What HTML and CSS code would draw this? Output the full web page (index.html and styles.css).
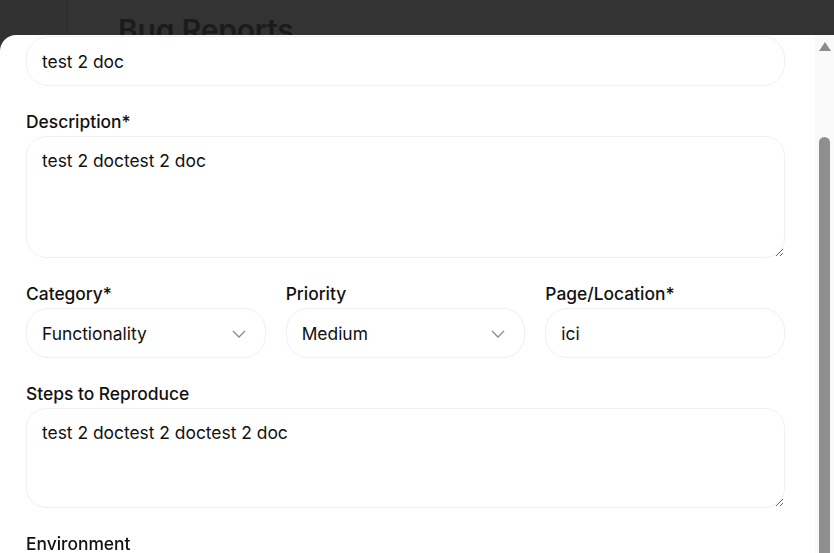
FILE: index.html
```html
<!DOCTYPE html>
<html lang="en">
<head>
<meta charset="utf-8">
<title>Bug Reports</title>
<link rel="stylesheet" href="styles.css">
</head>
<body>
<div class="app">
  <aside class="sidebar"></aside>
  <main class="page">
    <h1 class="page-title">Bug Reports</h1>
  </main>
</div>
<div class="overlay">
  <div class="modal">
    <div class="modal-body">
      <form class="form">
        <div class="field first">
          <input class="control input" type="text" value="test 2 doc">
        </div>
        <div class="field">
          <label class="label">Description*</label>
          <textarea class="control textarea desc">test 2 doctest 2 doc</textarea>
        </div>
        <div class="row">
          <div class="field">
            <label class="label">Category*</label>
            <div class="control select">
              <span>Functionality</span>
              <svg class="chev" width="14" height="8" viewBox="0 0 14 8"><path d="M1 1l6 6 6-6" fill="none" stroke="#8a8a8a" stroke-width="1.3"/></svg>
            </div>
          </div>
          <div class="field">
            <label class="label">Priority</label>
            <div class="control select">
              <span>Medium</span>
              <svg class="chev" width="14" height="8" viewBox="0 0 14 8"><path d="M1 1l6 6 6-6" fill="none" stroke="#8a8a8a" stroke-width="1.3"/></svg>
            </div>
          </div>
          <div class="field">
            <label class="label">Page/Location*</label>
            <input class="control input" type="text" value="ici">
          </div>
        </div>
        <div class="field">
          <label class="label">Steps to Reproduce</label>
          <textarea class="control textarea steps">test 2 doctest 2 doctest 2 doc</textarea>
        </div>
        <div class="field">
          <label class="label">Environment</label>
          <input class="control input" type="text" value="">
        </div>
      </form>
    </div>
    <div class="scrollbar">
      <div class="scroll-arrow"></div>
      <div class="scroll-thumb"></div>
    </div>
  </div>
</div>
</body>
</html>
```
FILE: styles.css
```css
* { box-sizing: border-box; }
html, body { margin: 0; padding: 0; height: 100%; overflow: hidden; }
body {
  background: #333333;
  font-family: Inter, "Noto Sans", sans-serif;
  color: #111;
}
.app { display: flex; height: 100%; }
.sidebar {
  width: 67px;
  flex: none;
  background: #323232;
  border-right: 1px solid #2b2b2b;
}
.page { flex: 1; padding: 12px 0 0 51px; }
.page-title {
  margin: 0;
  font-size: 30px;
  font-weight: 600;
  color: #1b1b1b;
  letter-spacing: -0.2px;
}
.overlay {
  position: fixed;
  top: 35px;
  left: 0;
  right: 0;
  bottom: 0;
}
.modal {
  height: 100%;
  background: #fff;
  border-radius: 16px 0 0 0;
  display: flex;
  overflow: hidden;
}
.modal-body {
  flex: 1;
  min-width: 0;
  padding: 1px 30px 0 26px;
}
.form { display: flex; flex-direction: column; gap: 24px; }
.field { display: flex; flex-direction: column; min-width: 0; }
.label {
  font-size: 17.4px;
  font-weight: 500;
  line-height: 24px;
  margin-bottom: 2px;
  color: #111;
}
.control {
  width: 100%;
  font-family: Inter, "Noto Sans", sans-serif;
  font-size: 17.4px;
  color: #111;
  background: #fff;
  border: 1px solid #f0f0f0;
  outline: none;
}
.input {
  height: 50px;
  border-radius: 22px;
  padding: 1px 15px 0;
}
.textarea {
  border-radius: 20px;
  padding: 12px 15px;
  line-height: 24px;
  resize: vertical;
}
.desc { height: 122px; }
.steps { height: 100px; }
.row {
  display: grid;
  grid-template-columns: repeat(3, minmax(0, 1fr));
  gap: 20px;
}
.select {
  height: 50px;
  border-radius: 22px;
  padding: 1px 19px 0 15px;
  display: flex;
  align-items: center;
  justify-content: space-between;
}
.chev { flex: none; }
.scrollbar {
  width: 19px;
  flex: none;
  background: #f9f9f9;
  display: flex;
  flex-direction: column;
  align-items: center;
}
.scroll-arrow {
  margin-top: 7px;
  width: 0;
  height: 0;
  border-left: 6px solid transparent;
  border-right: 6px solid transparent;
  border-bottom: 9px solid #8c8c8c;
}
.scroll-thumb {
  margin-top: 86px;
  width: 11px;
  flex: 1;
  background: #8f8f8f;
  border-radius: 6px 6px 0 0;
  margin-bottom: -20px;
}
```
